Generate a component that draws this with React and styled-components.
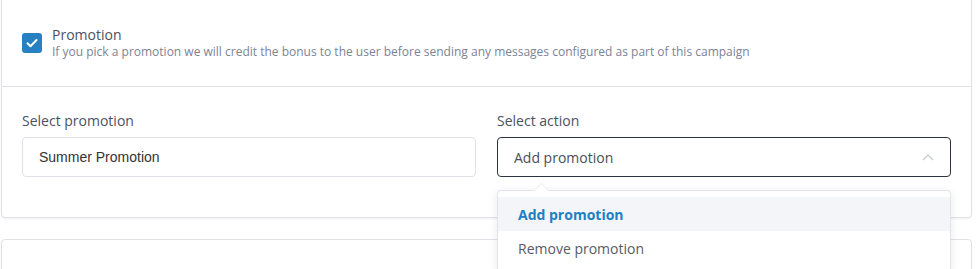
import React, { useState } from 'react'
import styled, { createGlobalStyle } from 'styled-components'

const GlobalStyle = createGlobalStyle`
  body {
    margin: 0;
    background: #fff;
    font-family: "Open Sans", "Liberation Sans", sans-serif;
    overflow: hidden;
  }
`

const Page = styled.div`
  padding: 0 8px 0 1px;
  margin-top: -4px;
`

const Card = styled.section`
  position: relative;
  background: #fff;
  border: 1px solid #e0e2e8;
  border-radius: 4px;
  box-shadow: 0 1px 2px rgba(30, 40, 60, 0.06);
  & + & {
    margin-top: 21px;
  }
`

const Header = styled.div`
  display: flex;
  align-items: center;
  gap: 10px;
  padding: 28px 20px 26px;
  border-bottom: ${({ divided }) => (divided ? '1px solid #e0e2e8' : 'none')};
`

const Check = styled.span`
  flex: none;
  width: 20px;
  height: 20px;
  border-radius: 3px;
  background: #2680c2;
  display: flex;
  align-items: center;
  justify-content: center;
`

const Title = styled.div`
  font-size: 14px;
  line-height: 19px;
  color: #4b5162;
`

const Hint = styled.div`
  font-size: 12px;
  line-height: 16px;
  color: #7c8396;
`

const Body = styled.div`
  display: grid;
  grid-template-columns: 1fr 1fr;
  gap: 21px;
  padding: 24px 20px 40px;
`

const Field = styled.div`
  position: relative;
  display: flex;
  flex-direction: column;
  gap: 7px;
`

const Label = styled.label`
  font-size: 14px;
  line-height: 19px;
  color: #4b5162;
`

const Input = styled.div`
  height: 40px;
  box-sizing: border-box;
  border: 1px solid ${({ active }) => (active ? '#2b3440' : '#dfe2e8')};
  border-radius: 4px;
  padding: 0 16px;
  display: flex;
  align-items: center;
  justify-content: space-between;
  font-family: ${({ native }) => (native ? '"Liberation Sans", Arial, sans-serif' : '"Open Sans", sans-serif')};
  font-size: 14px;
  color: ${({ native }) => (native ? '#333' : '#4a4e57')};
`

const Menu = styled.ul`
  position: absolute;
  top: 79px;
  left: 0;
  right: 0;
  z-index: 2;
  margin: 0;
  padding: 6px 0;
  list-style: none;
  background: #fff;
  border: 1px solid #e3e5ea;
  border-radius: 4px;
  box-shadow: 0 2px 8px rgba(30, 40, 60, 0.1);

  &::before {
    content: '';
    position: absolute;
    top: -6px;
    left: 38px;
    width: 10px;
    height: 10px;
    background: #fff;
    border-left: 1px solid #eceef2;
    border-top: 1px solid #eceef2;
    transform: rotate(45deg);
  }
`

const Option = styled.li`
  position: relative;
  height: 34px;
  display: flex;
  align-items: center;
  padding: 0 20px;
  font-size: 14px;
  font-weight: ${({ selected }) => (selected ? 700 : 400)};
  color: ${({ selected }) => (selected ? '#1d80c3' : '#575b63')};
  background: ${({ selected }) => (selected ? '#f4f5f9' : 'transparent')};
`

const Chevron = () => (
  <svg width="12" height="8" viewBox="0 0 12 8" fill="none">
    <path d="M1 7l5-5 5 5" stroke="#c9cdd5" strokeWidth="1.4" />
  </svg>
)

const Tick = () => (
  <svg width="12" height="10" viewBox="0 0 12 10" fill="none">
    <path d="M1.5 5.2l3 3L10.5 2" stroke="#fff" strokeWidth="2" strokeLinecap="round" strokeLinejoin="round" />
  </svg>
)

const actions = ['Add promotion', 'Remove promotion']

export default function App() {
  const [action] = useState(actions[0])

  return (
    <Page>
      <GlobalStyle />
      <Card>
        <Header divided>
          <Check>
            <Tick />
          </Check>
          <div>
            <Title>Promotion</Title>
            <Hint>
              If you pick a promotion we will credit the bonus to the user before sending any messages configured as part of this campaign
            </Hint>
          </div>
        </Header>
        <Body>
          <Field>
            <Label>Select promotion</Label>
            <Input native>Summer Promotion</Input>
          </Field>
          <Field>
            <Label>Select action</Label>
            <Input active>
              {action}
              <Chevron />
            </Input>
            <Menu>
              {actions.map((a) => (
                <Option key={a} selected={a === action}>
                  {a}
                </Option>
              ))}
            </Menu>
          </Field>
        </Body>
      </Card>
      <Card>
        <Header>
          <Check>
            <Tick />
          </Check>
          <div>
            <Title>Marketing messages</Title>
            <Hint>Send messages to users as part of this campaign</Hint>
          </div>
        </Header>
      </Card>
    </Page>
  )
}
